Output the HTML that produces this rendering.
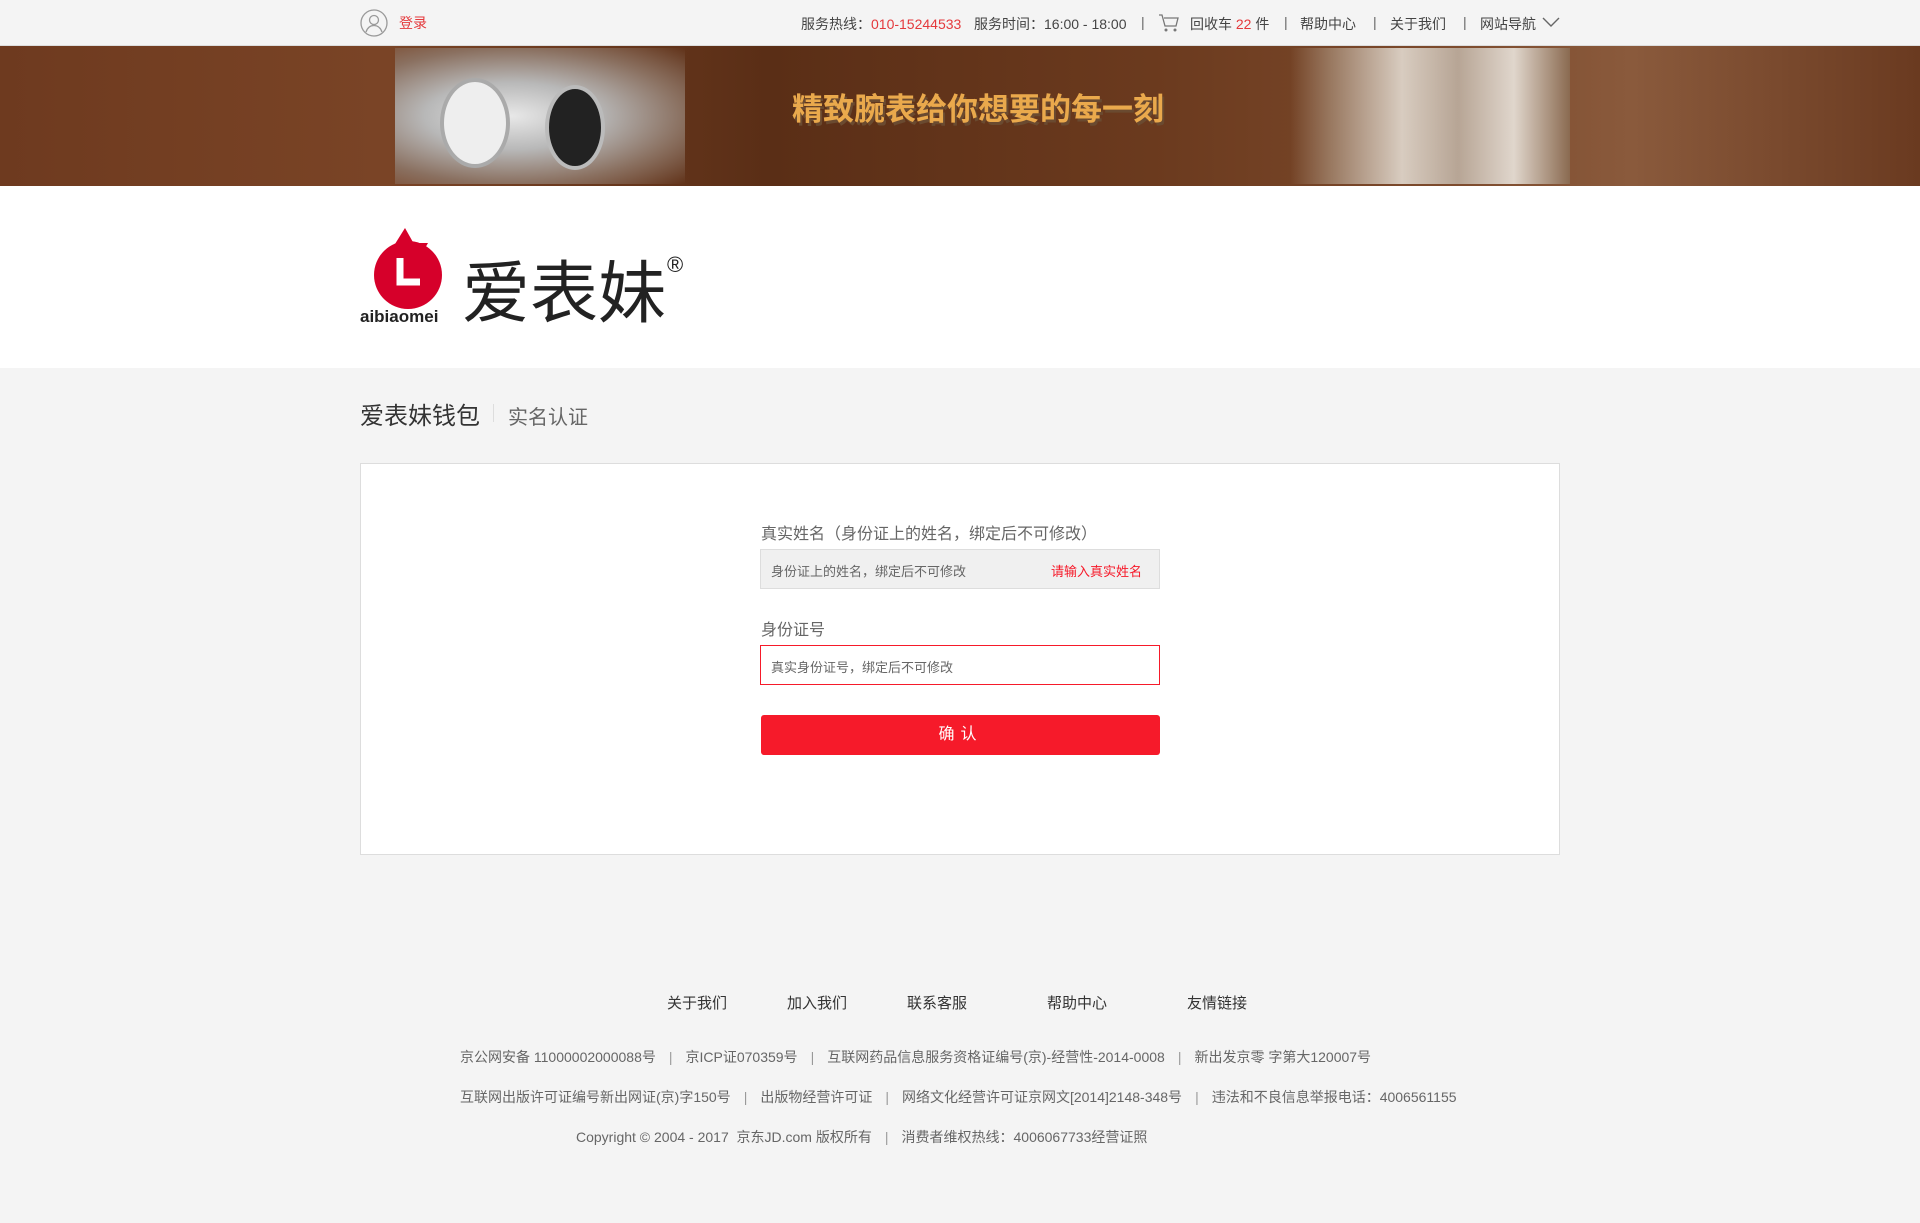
<!DOCTYPE html>
<html><head><meta charset="utf-8"><style>
*{margin:0;padding:0;box-sizing:border-box}
body{width:1920px;height:1223px;background:#f4f4f4;font-family:"Liberation Sans","Noto Sans CJK SC",sans-serif;position:relative;overflow:hidden;color:#333}
.a{position:absolute;white-space:nowrap}
.top{left:0;top:0;width:1920px;height:46px;background:#f4f4f4;border-bottom:1px solid #ddd}
.tr{font-size:14px;color:#444;top:14px}
.sep{color:#666}
.banner{left:0;top:46px;width:1920px;height:140px;background:linear-gradient(90deg,#6e3a1f 0%,#7a4426 20%,#5a2e16 40%,#6b3a1e 60%,#7c4a2c 75%,#8a5a3c 85%,#6a3a20 100%)}
.hdr{left:0;top:186px;width:1920px;height:182px;background:#fff}
.card{left:360px;top:463px;width:1200px;height:392px;background:#fff;border:1px solid #ddd}
.lbl{font-size:16px;color:#666}
.ft{font-size:14px;color:#666}
.ft i{font-style:normal;margin:0 13px;color:#999}
</style></head><body>
<div class="a top"></div>
<svg class="a" style="left:360px;top:9px" width="28" height="28" viewBox="0 0 28 28"><circle cx="14" cy="14" r="13" fill="none" stroke="#999" stroke-width="1.3"/><circle cx="14" cy="11" r="4.5" fill="none" stroke="#999" stroke-width="1.3"/><path d="M6 23c1.5-4.5 4.5-6.5 8-6.5s6.5 2 8 6.5" fill="none" stroke="#999" stroke-width="1.3"/></svg>
<div class="a" style="left:399px;top:13px;font-size:14px;color:#e4393c">登录</div>
<div class="a tr" style="left:801px">服务热线：<span style="color:#e4393c">010-15244533</span></div>
<div class="a tr" style="left:974px">服务时间：16:00 - 18:00</div>
<div class="a tr sep" style="left:1141px">|</div>
<svg class="a" style="left:1158px;top:12px" width="22" height="22" viewBox="0 0 22 22"><path d="M1 3h3l3 11h11l2-8H6" fill="none" stroke="#777" stroke-width="1.3"/><circle cx="8" cy="18" r="1.5" fill="#777"/><circle cx="17" cy="18" r="1.5" fill="#777"/></svg>
<div class="a tr" style="left:1190px">回收车 <span style="color:#e4393c">22</span> 件</div>
<div class="a tr sep" style="left:1284px">|</div>
<div class="a tr" style="left:1300px">帮助中心</div>
<div class="a tr sep" style="left:1373px">|</div>
<div class="a tr" style="left:1390px">关于我们</div>
<div class="a tr sep" style="left:1463px">|</div>
<div class="a tr" style="left:1480px">网站导航</div>
<svg class="a" style="left:1542px;top:16px" width="18" height="12" viewBox="0 0 18 12"><path d="M1 2l8 8 8-8" fill="none" stroke="#666" stroke-width="1.4"/></svg>

<div class="a banner"></div>
<div class="a" style="left:395px;top:48px;width:290px;height:136px;background:radial-gradient(ellipse at 40% 50%,#e8e8e8 0%,#b8b8b8 35%,#8a7060 70%,rgba(110,58,31,0) 100%)"></div>
<div class="a" style="left:440px;top:78px;width:70px;height:90px;border-radius:50%;background:#eee;border:4px solid #aaa"></div>
<div class="a" style="left:545px;top:85px;width:60px;height:85px;border-radius:50%;background:#222;border:4px solid #bbb"></div>
<div class="a" style="left:1290px;top:48px;width:280px;height:136px;background:linear-gradient(90deg,rgba(110,58,31,0),#9a7a62 15%,#d8ccc0 40%,#b7a595 60%,#e0d6cc 80%,#8a6a50)"></div>
<div class="a" style="left:792px;top:84px;font-size:31px;font-weight:bold;color:#eaa94c;text-shadow:2px 3px 0 #6a4a30">精致腕表给你想要的每一刻</div>

<div class="a hdr"></div>
<svg class="a" style="left:360px;top:226px" width="100" height="100" viewBox="0 0 100 100"><path d="M45 2l9 16-19 0z" fill="#d6002a"/><path d="M52 17l16 0-8 14z" fill="#d6002a"/><circle cx="48" cy="49" r="34" fill="#d6002a"/><path d="M40 32v24h20" fill="none" stroke="#fff" stroke-width="7"/></svg>
<div class="a" style="left:360px;top:307px;font-size:17px;font-weight:bold;color:#222">aibiaomei</div>
<div class="a" style="left:462px;top:254px;font-size:68px;color:#222;line-height:80px">爱表妹</div>
<div class="a" style="left:667px;top:252px;font-size:22px;color:#222">®</div>

<div class="a" style="left:360px;top:396px;font-size:24px;color:#333">爱表妹钱包</div>
<div class="a" style="left:493px;top:404px;width:1px;height:18px;background:#ddd"></div>
<div class="a" style="left:508px;top:401px;font-size:20px;color:#666">实名认证</div>

<div class="a card"></div>
<div class="a lbl" style="left:761px;top:520px">真实姓名（身份证上的姓名，绑定后不可修改）</div>
<div class="a" style="left:760px;top:549px;width:400px;height:40px;background:#f0f0f0;border:1px solid #ddd"></div>
<div class="a" style="left:771px;top:561px;font-size:13px;color:#666">身份证上的姓名，绑定后不可修改</div>
<div class="a" style="left:1051px;top:561px;font-size:13px;color:#f61a2a">请输入真实姓名</div>
<div class="a lbl" style="left:761px;top:616px">身份证号</div>
<div class="a" style="left:760px;top:645px;width:400px;height:40px;background:#fff;border:1px solid #f61a2a"></div>
<div class="a" style="left:771px;top:657px;font-size:13px;color:#666">真实身份证号，绑定后不可修改</div>
<div class="a" style="left:761px;top:715px;width:399px;height:40px;background:#f61a2a;border-radius:3px;color:#fff;font-size:16px;text-align:center;line-height:40px;letter-spacing:6px">确认</div>

<div class="a" style="left:667px;top:992px;font-size:15px">关于我们</div>
<div class="a" style="left:787px;top:992px;font-size:15px">加入我们</div>
<div class="a" style="left:907px;top:992px;font-size:15px">联系客服</div>
<div class="a" style="left:1047px;top:992px;font-size:15px">帮助中心</div>
<div class="a" style="left:1187px;top:992px;font-size:15px">友情链接</div>
<div class="a ft" style="left:460px;top:1047px">京公网安备 11000002000088号<i>|</i>京ICP证070359号<i>|</i>互联网药品信息服务资格证编号(京)-经营性-2014-0008<i>|</i>新出发京零 字第大120007号</div>
<div class="a ft" style="left:460px;top:1087px">互联网出版许可证编号新出网证(京)字150号<i>|</i>出版物经营许可证<i>|</i>网络文化经营许可证京网文[2014]2148-348号<i>|</i>违法和不良信息举报电话：4006561155</div>
<div class="a ft" style="left:576px;top:1127px">Copyright © 2004 - 2017 &nbsp;京东JD.com 版权所有<i>|</i>消费者维权热线：4006067733经营证照</div>
</body></html>
